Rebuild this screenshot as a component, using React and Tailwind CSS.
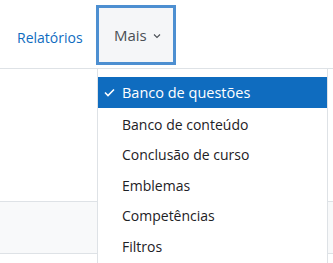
import React from 'react'

const items = [
  'Banco de conteúdo',
  'Conclusão de curso',
  'Emblemas',
  'Competências',
  'Filtros',
]

const App = () => {
  return (
    <div className="relative w-[333px] h-[263px] overflow-hidden bg-white text-[14px] text-[#1d2125]" style={{ fontFamily: '"Open Sans", sans-serif' }}>
      <nav className="flex items-start h-[69px] border-b border-[#dee2e6]">
        <a className="mt-[28px] ml-[17px] w-[64px] text-[#0f6cbf] leading-5 whitespace-nowrap">Relatórios</a>
        <div className="ml-[15px] mt-[5px] w-[80px] h-[60px] border-[3px] border-[#4d8fd1] bg-[#f5f6f8] flex items-center pl-[15px] text-[#4a4f55]">
          <span className="leading-5 text-[15px]">Mais</span>
          <svg className="ml-[6px] mt-[2px] w-[8px] h-[8px]" viewBox="0 0 8 8" fill="none" stroke="#4a4f55" strokeWidth="1.1">
            <path d="M1 2.5 L4 5.5 L7 2.5" />
          </svg>
        </div>
      </nav>

      <div className="mt-[132px] h-[53px] bg-[#f8f9fa] border-y border-[#dee2e6]" />

      <div className="absolute left-[97px] top-[68px] w-[231px] h-[210px] bg-white border border-[#dee2e6] pt-[8px]">
        <div className="flex items-center h-[31px] bg-[#0f6cbf] text-white">
          <svg className="ml-[6px] w-[11px] h-[9px]" viewBox="0 0 11 9" fill="none" stroke="white" strokeWidth="1.6">
            <path d="M1 4.5 L4 7.5 L10 1.5" />
          </svg>
          <span className="ml-[7px] text-[14.5px]">Banco de questões</span>
        </div>
        <div className="pt-px">
          {items.map((t) => (
            <div key={t} className="flex items-center h-[30.5px] pl-[24px]">
              {t}
            </div>
          ))}
        </div>
      </div>
    </div>
  )
}

export default App
